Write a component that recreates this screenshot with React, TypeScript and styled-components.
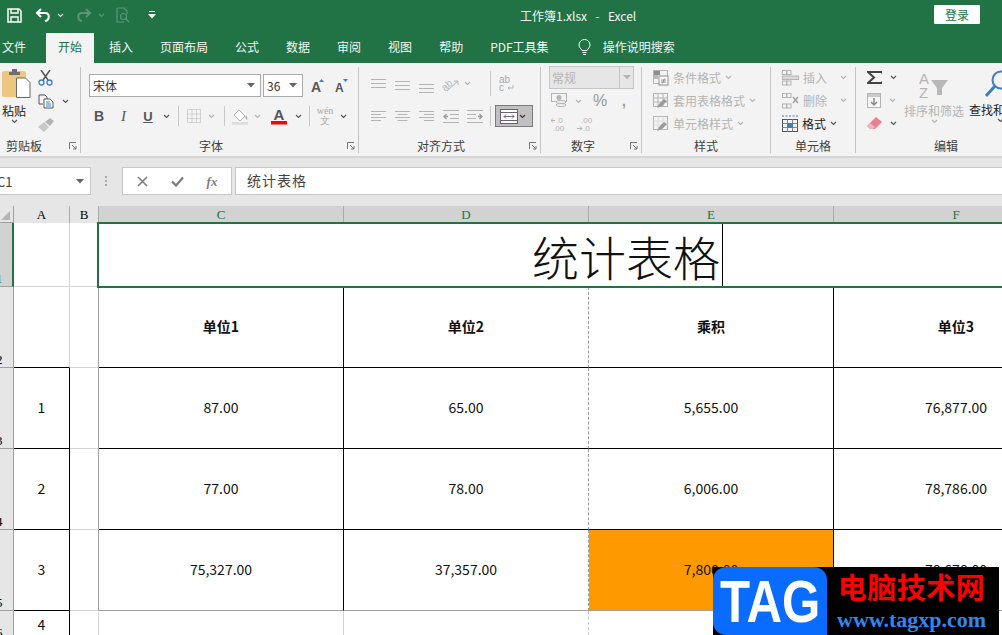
import React from 'react';
import styled, { createGlobalStyle } from 'styled-components';

const UI_FONT = `"Noto Sans CJK SC", "Noto Sans", sans-serif`;
const GREEN = '#217346';
const DIM = '#b4b4b4';
const BLACK_LINE = '#000000';
const GRID_LINE = '#d4d4d4';
const HEAD_LINE = '#a0a0a0';

const GlobalStyle = createGlobalStyle`
  html, body {
    margin: 0;
    padding: 0;
    background: #fff;
  }
  * {
    box-sizing: border-box;
  }
`;

const Page = styled.div`
  position: relative;
  width: 1002px;
  height: 635px;
  overflow: hidden;
  font-family: ${UI_FONT};
  font-size: 12px;
  color: #333;
  background: #fff;
`;

/* title bar */
const TitleBar = styled.div`
  display: flex;
  align-items: center;
  height: 33px;
  padding-bottom: 3px;
  background: ${GREEN};
  color: #fff;
`;

const Quick = styled.div`
  display: flex;
  align-items: center;
  width: 520px;
  padding-left: 7px;
`;

const QuickIcon = styled.span<{ $ml?: number }>`
  display: inline-flex;
  margin-left: ${(p) => p.$ml ?? 0}px;
`;

const DocTitle = styled.div`
  font-size: 12px;
  white-space: pre;
  word-spacing: 1.5px;
  color: #f2f7f4;
`;

const SignIn = styled.button`
  width: 46px;
  height: 19px;
  margin: -2px 22px 0 auto;
  padding: 0;
  border: 0;
  border-radius: 1px;
  background: #fff;
  color: ${GREEN};
  font-family: ${UI_FONT};
  font-size: 12px;
  line-height: 19px;
`;

/* tabs */
const Tabs = styled.div`
  display: flex;
  height: 30px;
  padding-left: 2px;
  background: ${GREEN};
`;

const Tab = styled.div<{ $active?: boolean; $first?: boolean }>`
  display: flex;
  align-items: center;
  height: 30px;
  padding: 0 ${(p) => (p.$first ? 0 : 12)}px 4px;
  margin-right: ${(p) => (p.$first ? 20 : 3)}px;
  background: ${(p) => (p.$active ? '#f3f3f3' : 'transparent')};
  color: ${(p) => (p.$active ? GREEN : '#f2f7f4')};
  white-space: nowrap;
`;

const Bulb = styled.span`
  display: inline-flex;
  margin: -2px 0 0 14px;
  align-self: center;
`;

/* ribbon */
const Ribbon = styled.div`
  display: flex;
  height: 95px;
  padding-top: 3px;
  background: #f3f3f3;
  border-bottom: 2px solid #d6d6d6;
  overflow: hidden;
`;

const Group = styled.div<{ $w: number; $last?: boolean }>`
  position: relative;
  display: flex;
  flex-direction: column;
  flex: none;
  width: ${(p) => p.$w}px;
  height: 88px;
  &::after {
    content: '';
    display: ${(p) => (p.$last ? 'none' : 'block')};
    position: absolute;
    right: 0;
    top: 1px;
    bottom: 1px;
    width: 1px;
    background: #c4c4c4;
  }
`;

const GroupBody = styled.div<{ $pl?: number; $pt?: number; $gap?: number; $row?: boolean }>`
  display: flex;
  flex-direction: ${(p) => (p.$row ? 'row' : 'column')};
  flex: 1;
  min-height: 0;
  padding-left: ${(p) => p.$pl ?? 0}px;
  padding-top: ${(p) => p.$pt ?? 0}px;
  gap: ${(p) => p.$gap ?? 0}px;
`;

const GroupLabel = styled.div<{ $pr?: number; $pl?: number }>`
  position: relative;
  flex: none;
  height: 16px;
  line-height: 16px;
  text-align: center;
  color: #404040;
  padding-left: ${(p) => p.$pl ?? 0}px;
  padding-right: ${(p) => p.$pr ?? 1}px;
`;

const Launcher = styled.span`
  position: absolute;
  right: 4px;
  top: 4px;
  display: inline-flex;
`;

const ToolRow = styled.div<{ $h: number }>`
  display: flex;
  align-items: center;
  flex: none;
  height: ${(p) => p.$h}px;
`;

const Tool = styled.span<{ $w: number; $ml?: number; $pt?: number }>`
  display: inline-flex;
  align-items: center;
  justify-content: center;
  flex: none;
  width: ${(p) => p.$w}px;
  margin-left: ${(p) => p.$ml ?? 0}px;
  padding-top: ${(p) => p.$pt ?? 0}px;
`;

const ToolSep = styled.span<{ $ml: number; $mr: number }>`
  flex: none;
  align-self: stretch;
  width: 1px;
  margin: 1px ${(p) => p.$mr}px 1px ${(p) => p.$ml}px;
  background: #c8c8c8;
`;

const Combo = styled.div<{ $w: number; $mr?: number }>`
  display: flex;
  align-items: center;
  justify-content: space-between;
  flex: none;
  width: ${(p) => p.$w}px;
  height: 23px;
  margin-right: ${(p) => p.$mr ?? 0}px;
  padding: 0 5px 0 3px;
  background: #fff;
  border: 1px solid #ababab;
  color: #333;
`;

const Glyph = styled.span<{ $color?: string; $weight?: number; $italic?: boolean; $size?: number; $under?: boolean }>`
  font-family: "Liberation Serif", serif;
  font-size: ${(p) => p.$size ?? 14}px;
  font-weight: ${(p) => p.$weight ?? 700};
  font-style: ${(p) => (p.$italic ? 'italic' : 'normal')};
  text-decoration: ${(p) => (p.$under ? 'underline' : 'none')};
  text-align: center;
  color: ${(p) => p.$color ?? '#555'};
  line-height: 1;
`;

const SansGlyph = styled(Glyph)`
  font-family: "Liberation Sans", sans-serif;
`;

const MergeButton = styled.div`
  display: flex;
  align-items: center;
  justify-content: space-between;
  flex: none;
  width: 38px;
  height: 22px;
  padding: 0 6px 0 4px;
  background: #c0c0c0;
  border: 1px solid #7a7a7a;
`;

const NumberSelect = styled.div`
  display: flex;
  align-items: center;
  flex: none;
  width: 85px;
  height: 23px;
  background: #e6e6e6;
  border: 1px solid #c6c6c6;
  color: ${DIM};
  font-size: 12px;
  padding-left: 2px;
`;

const NumberArrow = styled.span`
  display: inline-flex;
  align-items: center;
  justify-content: center;
  width: 14px;
  height: 100%;
  margin-left: auto;
  border-left: 1px solid #c6c6c6;
`;

const MenuItem = styled.div<{ $dim?: boolean }>`
  display: flex;
  align-items: center;
  height: 23px;
  gap: 4px;
  color: ${(p) => (p.$dim ? DIM : '#222')};
  white-space: nowrap;
`;

const EditColumn = styled.div<{ $w: number; $ml?: number; $pt?: number; $center?: boolean }>`
  display: flex;
  flex-direction: column;
  flex: none;
  width: ${(p) => p.$w}px;
  margin-left: ${(p) => p.$ml ?? 0}px;
  padding-top: ${(p) => p.$pt ?? 0}px;
  align-items: ${(p) => (p.$center ? 'center' : 'flex-start')};
`;

const EditCaption = styled.div<{ $dim?: boolean }>`
  margin-top: 4px;
  color: ${(p) => (p.$dim ? DIM : '#222')};
  white-space: nowrap;
  line-height: 16px;
`;

const PasteColumn = styled.div`
  display: flex;
  flex-direction: column;
  align-items: center;
  flex: none;
  width: 24px;
  margin-right: 12px;
  padding-top: 2px;
  color: #222;
`;

const PasteGraphic = styled.span`
  display: inline-flex;
  align-self: flex-start;
`;

const PasteCaption = styled.div`
  margin-top: 5px;
  line-height: 16px;
  white-space: nowrap;
`;

const ColumnStack = styled.div`
  display: flex;
  flex-direction: column;
`;

/* formula bar */
const FormulaBar = styled.div`
  display: flex;
  align-items: flex-start;
  height: 48px;
  padding-top: 9px;
  background: #e6e6e6;
`;

const NameBox = styled.div`
  display: flex;
  align-items: center;
  justify-content: space-between;
  width: 92px;
  height: 28px;
  margin-left: -1px;
  padding: 0 6px 0 0;
  background: #fff;
  border: 1px solid #c6c6c6;
  color: #444;
  font-size: 13px;
  overflow: hidden;
`;

const NameText = styled.span`
  margin-left: -3px;
`;

const Dots = styled.span`
  display: flex;
  flex-direction: column;
  gap: 2px;
  width: 2px;
  margin: 9px 15px 0 14px;
  i {
    display: block;
    width: 2px;
    height: 2px;
    background: #a8a8a8;
  }
`;

const FormulaButtons = styled.div`
  display: flex;
  align-items: center;
  justify-content: space-around;
  width: 110px;
  height: 28px;
  padding: 0 2px;
  background: #fff;
  border: 1px solid #c6c6c6;
`;

const FormulaInput = styled.div`
  flex: 1;
  height: 28px;
  margin-left: 3px;
  padding-left: 11px;
  background: #fff;
  border: 1px solid #c6c6c6;
  border-right: 0;
  color: #444;
  font-size: 14px;
  letter-spacing: 1px;
  line-height: 25px;
`;

/* sheet */
const Sheet = styled.div`
  display: grid;
  grid-template-columns: 14px 56px 29px 245px 245px 245px 245px;
  grid-template-rows: 17px 64px 81px 81px 81px 81px 30px;
  width: 1079px;
  background: #fff;
`;

const Corner = styled.div`
  display: flex;
  align-items: flex-end;
  justify-content: flex-end;
  padding: 0 3px 2px 0;
  background: #e6e6e6;
  border-right: 1px solid ${HEAD_LINE};
  border-bottom: 1px solid ${HEAD_LINE};
`;

const ColHead = styled.div<{ $sel?: boolean }>`
  display: flex;
  align-items: center;
  justify-content: center;
  background: ${(p) => (p.$sel ? '#d2d2d2' : '#e6e6e6')};
  border-right: 1px solid #ababab;
  color: ${(p) => (p.$sel ? GREEN : '#000')};
  font-family: "Liberation Serif", serif;
  font-size: 13px;
  line-height: 1;
`;

const RowHead = styled.div<{ $sel?: boolean }>`
  display: flex;
  align-items: flex-end;
  overflow: hidden;
  background: ${(p) => (p.$sel ? '#d2d2d2' : '#e6e6e6')};
  border-right: ${(p) => (p.$sel ? `2px solid ${GREEN}` : `1px solid ${HEAD_LINE}`)};
  border-bottom: 1px solid ${HEAD_LINE};
  color: ${(p) => (p.$sel ? GREEN : '#000')};
  font-family: "Liberation Serif", serif;
  font-size: 13px;
  line-height: 14px;
  span {
    margin-left: -4px;
  }
`;

const Cell = styled.div<{ $r?: string; $b?: string; $dashed?: boolean; $bg?: string; $bold?: boolean }>`
  display: flex;
  align-items: center;
  justify-content: center;
  padding-bottom: 3px;
  background: ${(p) => p.$bg ?? '#fff'};
  border-right: 1px ${(p) => (p.$dashed ? 'dashed' : 'solid')} ${(p) => p.$r ?? GRID_LINE};
  border-bottom: 1px solid ${(p) => p.$b ?? GRID_LINE};
  color: #111;
  font-size: 14px;
  font-weight: ${(p) => (p.$bold ? 700 : 400)};
`;

const TitleCell = styled.div`
  position: relative;
  grid-column: 4 / span 4;
  display: flex;
  align-items: center;
  padding-left: 433px;
  background: #fff;
  &::after {
    content: '';
    position: absolute;
    left: -2px;
    right: -2px;
    top: -1px;
    bottom: -1px;
    border: 2px solid ${GREEN};
  }
`;

const TitleText = styled.span`
  display: flex;
  align-items: center;
  height: 100%;
  padding-right: 2px;
  border-right: 1px solid #000;
  color: #111;
  font-size: 47px;
  font-weight: 300;
  line-height: 1;
`;

/* watermark */
const Watermark = styled.div`
  position: absolute;
  left: 713px;
  top: 567px;
  display: flex;
  width: 286px;
  height: 68px;
  background: #000;
`;

const TagBox = styled.div`
  display: flex;
  align-items: center;
  justify-content: center;
  width: 114px;
  height: 68px;
  overflow: hidden;
  border-radius: 13px 13px 0 13px;
  background: #0a6cff;
  color: #fff;
  font-family: "Liberation Sans", sans-serif;
  font-size: 60px;
  font-weight: 700;
`;

const TagLetters = styled.span`
  display: inline-block;
  transform: scaleX(0.82);
`;

const TagText = styled.div`
  display: flex;
  flex-direction: column;
  align-items: center;
  padding-left: 10px;
`;

const TagName = styled.div`
  color: #f00;
  font-size: 29px;
  font-weight: 700;
  letter-spacing: 0.5px;
  line-height: 38px;
`;

const TagUrl = styled.div`
  margin-top: 3px;
  color: #2f86f5;
  font-family: "Liberation Serif", serif;
  font-size: 22px;
  font-weight: 700;
  line-height: 24px;
  white-space: nowrap;
`;

/* icons */
const Chev = ({ color = '#555' }: { color?: string }): JSX.Element => (
  <svg width="7" height="5" viewBox="0 0 7 5" fill="none">
    <path d="M1 1l2.5 2.5L6 1" stroke={color} strokeWidth="1.1" />
  </svg>
);

const DropTriangle = ({ color = '#666' }: { color?: string }): JSX.Element => (
  <svg width="8" height="5" viewBox="0 0 8 5">
    <path d="M0 0h8L4 4.5z" fill={color} />
  </svg>
);

const SaveIcon = (): JSX.Element => (
  <svg width="15" height="15" viewBox="0 0 15 15" fill="none">
    <path d="M1 1h11l2 2v11H1z" stroke="#fff" strokeWidth="1.5" />
    <path d="M4 1v4h7V1M4 14V9h7v5" stroke="#fff" strokeWidth="1.4" />
  </svg>
);

const UndoIcon = ({ color = '#fff', flip = false }: { color?: string; flip?: boolean }): JSX.Element => (
  <svg width="16" height="14" viewBox="0 0 16 14" fill="none" transform={flip ? 'scale(-1 1)' : undefined}>
    <path d="M6 1L2 5l4 4M2 5h8c5 0 5 7 0 8" stroke={color} strokeWidth="2" />
  </svg>
);

const PreviewIcon = (): JSX.Element => (
  <svg width="14" height="16" viewBox="0 0 14 16" fill="none">
    <path d="M1 1h7l3 3v3M1 1v14h7" stroke="#5b9478" strokeWidth="1.2" />
    <circle cx="7.5" cy="9.5" r="3" stroke="#5b9478" strokeWidth="1.2" />
    <path d="M10 12l3 3" stroke="#5b9478" strokeWidth="1.4" />
  </svg>
);

const CustomizeIcon = (): JSX.Element => (
  <svg width="8" height="8" viewBox="0 0 8 8">
    <path d="M1 0h6v1H1zM0 3h8L4 7.5z" fill="#fff" />
  </svg>
);

const BulbIcon = (): JSX.Element => (
  <svg width="13" height="17" viewBox="0 0 13 17" fill="none">
    <path d="M4 11.5C3 9.5 1 8.5 1 6a5.5 5.5 0 0 1 11 0c0 2.5-2 3.5-3 5.5z" stroke="#fff" strokeWidth="1" />
    <path d="M4.5 13.5h4M5 15.5h3" stroke="#fff" strokeWidth="1.1" />
  </svg>
);

const PasteIcon = (): JSX.Element => (
  <svg width="29" height="30" viewBox="0 0 29 30">
    <rect x="0" y="3" width="24" height="26" rx="2" fill="#edc77f" />
    <path d="M7 4h3V1h5v3h3v3H7z" fill="#6e6e6e" />
    <path d="M14.5 10h9l4.5 4.5V29.5H14.5z" fill="#fff" stroke="#6a6a6a" strokeWidth="1" />
  </svg>
);

const CutIcon = (): JSX.Element => (
  <svg width="15" height="16" viewBox="0 0 15 16" fill="none">
    <path d="M3 0l7 10M12 0L5 10" stroke="#555" strokeWidth="1.5" />
    <circle cx="3.5" cy="12.5" r="2.5" stroke="#3f7fc0" strokeWidth="1.3" />
    <circle cx="11.5" cy="12.5" r="2.5" stroke="#3f7fc0" strokeWidth="1.3" />
  </svg>
);

const CopyIcon = (): JSX.Element => (
  <svg width="16" height="15" viewBox="0 0 16 15" fill="none">
    <path d="M1 1h6l2 2v2M1 1v9h4" stroke="#555" />
    <path d="M6 5h6l3 3v6H6z" fill="#fff" stroke="#555" />
    <path d="M8 8h4M8 10h5M8 12h5" stroke="#3f7fc0" />
  </svg>
);

const BrushIcon = (): JSX.Element => (
  <svg width="16" height="14" viewBox="0 0 16 14">
    <path d="M0 9l6-5 5 5-5 5z" fill="#c9c9c9" />
    <path d="M7 4l5-4 4 3-4 5z" fill="#b4b4b4" />
  </svg>
);

const GrowIcon = ({ size, accent, up }: { size: number; accent: string; up: boolean }): JSX.Element => (
  <svg width="14" height="15" viewBox="0 0 14 15">
    <path d={up ? 'M8 4h5L10.5 1z' : 'M8 1h5L10.5 4z'} fill={accent} />
    <text x="0" y="14" fontFamily="Liberation Sans" fontWeight="700" fontSize={size} fill="#555">A</text>
  </svg>
);

const BorderIcon = (): JSX.Element => (
  <svg width="14" height="14" viewBox="0 0 14 14" fill="none" stroke={DIM} strokeDasharray="1 1">
    <path d="M.5 .5h13v13H.5zM5 .5v13M9.5 .5v13M.5 5h13M.5 9.5h13" />
  </svg>
);

const FillIcon = (): JSX.Element => (
  <svg width="17" height="17" viewBox="0 0 17 17" fill="none">
    <path d="M2 7l5-5 6 6-5 5z" fill="#fff" stroke={DIM} />
    <path d="M14 7c1 2 2 3 1 5-2-1-2-3-1-5z" fill={DIM} />
    <rect x="0" y="14" width="16" height="3" fill="#dedede" />
  </svg>
);

const FontColorIcon = (): JSX.Element => (
  <svg width="16" height="18" viewBox="0 0 16 18">
    <text x="2.5" y="13" fontFamily="Liberation Sans" fontWeight="700" fontSize="15" fill="#555">A</text>
    <rect x="0" y="14" width="16" height="3.5" fill="#f00" />
  </svg>
);

const VAlignIcon = (): JSX.Element => (
  <svg width="15" height="9" viewBox="0 0 15 9" fill="none" stroke={DIM}>
    <path d="M0 .5h15M0 4.5h15M0 8.5h15" />
  </svg>
);

const HAlignIcon = ({ align }: { align: 'l' | 'c' | 'r' }): JSX.Element => {
  const widths = [15, 10, 15, 10];
  return (
    <svg width="15" height="10" viewBox="0 0 15 10" fill="none" stroke={DIM}>
      {widths.map((w, i) => {
        const x = align === 'l' ? 0 : align === 'c' ? (15 - w) / 2 : 15 - w;
        return <path key={i} d={`M${x} ${i * 3 + 0.5}h${w}`} />;
      })}
    </svg>
  );
};

const IndentIcon = ({ flip }: { flip?: boolean }): JSX.Element => (
  <svg width="16" height="13" viewBox="0 0 16 13" fill="none" stroke={DIM} transform={flip ? 'scale(-1 1)' : undefined}>
    <path d="M0 .5h16M7 4.5h9M7 8.5h9M0 12.5h16" />
    <path d="M5 6.5H1M3.5 4L1 6.5 3.5 9" strokeWidth="1.3" stroke="#9a9a9a" />
  </svg>
);

const OrientIcon = (): JSX.Element => (
  <svg width="17" height="16" viewBox="0 0 17 16" fill="none">
    <text x="0" y="12" transform="rotate(-40 6 10)" fontFamily="Liberation Sans" fontSize="10" fill={DIM}>ab</text>
    <path d="M5 15L16 5M16 5h-4M16 5v4" stroke={DIM} />
  </svg>
);

const WrapIcon = (): JSX.Element => (
  <svg width="16" height="17" viewBox="0 0 16 17">
    <text x="0" y="8" fontFamily="Liberation Sans" fontSize="10" fill="#a8a8a8">ab</text>
    <text x="0" y="16" fontFamily="Liberation Sans" fontSize="10" fill="#a8a8a8">c</text>
    <path d="M14 10v3H9M10.5 11.5L9 13l1.5 1.5" fill="none" stroke={DIM} />
  </svg>
);

const MergeIcon = (): JSX.Element => (
  <svg width="18" height="15" viewBox="0 0 18 15">
    <rect x=".5" y=".5" width="17" height="14" fill="#fff" stroke="#6f5a7a" />
    <path d="M.5 3.5h17M.5 11.5h17" stroke="#6f5a7a" />
    <path d="M4 7.5h10M6 5.5l-2 2 2 2M12 5.5l2 2-2 2" stroke="#6f6f6f" fill="none" />
  </svg>
);

const CurrencyIcon = (): JSX.Element => (
  <svg width="17" height="16" viewBox="0 0 17 16" fill="none">
    <rect x=".5" y=".5" width="15" height="8" stroke={DIM} />
    <circle cx="8" cy="4.5" r="2.5" fill={DIM} />
    <ellipse cx="10" cy="9" rx="5" ry="1.5" stroke={DIM} fill="#f3f3f3" />
    <ellipse cx="10" cy="12" rx="5" ry="1.5" stroke={DIM} fill="#f3f3f3" />
  </svg>
);

const DecimalIcon = ({ inc }: { inc: boolean }): JSX.Element => (
  <svg width="16" height="16" viewBox="0 0 16 16">
    <text x={inc ? 5 : 4} y="7" fontFamily="Liberation Sans" fontSize="8" fill={DIM}>{inc ? '.0' : '.00'}</text>
    <text x={inc ? 2 : 6} y="15" fontFamily="Liberation Sans" fontSize="8" fill={DIM}>{inc ? '.00' : '.0'}</text>
    <path d={inc ? 'M4 4.5H0M2 2.5l-2 2 2 2' : 'M0 12.5h5M3 10.5l2 2-2 2'} stroke={DIM} fill="none" />
  </svg>
);

const SheetStyleIcon = ({ kind }: { kind: 'cond' | 'table' | 'cell' }): JSX.Element => (
  <svg width="16" height="16" viewBox="0 0 16 16" fill="none">
    <rect x=".5" y=".5" width="14" height="13" fill="#f3f3f3" stroke={DIM} />
    {kind === 'cond' && (
      <>
        <rect x="1" y="1" width="6" height="4" fill="#8d8d8d" />
        <rect x="1" y="5" width="4" height="4" fill="#b9b9b9" />
        <rect x="6" y="6" width="9" height="9" fill="#fff" stroke="#8d8d8d" />
        <path d="M8 10h5M8 12h5M11.5 8.5l-2 5" stroke="#8d8d8d" />
      </>
    )}
    {kind !== 'cond' && (
      <>
        <path d="M.5 5h14M.5 9h14M5 .5v13M10 .5v13" stroke={kind === 'table' ? DIM : '#dcdcdc'} />
        <path d="M4 15l2-4 5-5 3 2-5 5z" fill="#9a9a9a" />
      </>
    )}
  </svg>
);

const CellOpIcon = ({ mark }: { mark: 'insert' | 'delete' }): JSX.Element => (
  <svg width="17" height="16" viewBox="0 0 17 16" fill="none" stroke={DIM}>
    <rect x=".5" y=".5" width="4" height="4" />
    <rect x="5" y=".5" width="4" height="4" />
    <rect x=".5" y="11" width="4" height="4" />
    <rect x="5" y="11" width="4" height="4" />
    {mark === 'insert' ? (
      <rect x=".5" y="6" width="16" height="3.5" fill="#dcdcdc" />
    ) : (
      <path d="M11 4l5 6M16 4l-5 6" strokeWidth="1.4" stroke="#a0a0a0" />
    )}
  </svg>
);

const FormatIcon = (): JSX.Element => (
  <svg width="16" height="17" viewBox="0 0 16 17" fill="none">
    <path d="M0 1h16" stroke="#3f7fc0" strokeDasharray="2 1.5" />
    <rect x=".5" y="4.5" width="15" height="12" stroke="#555" />
    <path d="M.5 8.5h15M.5 12.5h15M5.5 4.5v12M10.5 4.5v12" stroke="#888" />
    <rect x="5" y="8" width="6" height="5" fill="#3f7fc0" />
  </svg>
);

const SigmaIcon = (): JSX.Element => (
  <svg width="15" height="13" viewBox="0 0 15 13" fill="none">
    <path d="M15 2.5V1H1l6 5.5L1 12h14v-1.5" stroke="#444" strokeWidth="2" />
  </svg>
);

const FillDownIcon = (): JSX.Element => (
  <svg width="14" height="15" viewBox="0 0 14 15" fill="none">
    <rect x=".5" y=".5" width="13" height="14" fill="#f7f7f7" stroke={DIM} />
    <path d="M1 1h12v3H1z" fill="#c9c9c9" />
    <path d="M7 5v7M4 9l3 3 3-3" stroke="#8a8a8a" strokeWidth="1.5" />
  </svg>
);

const EraserIcon = (): JSX.Element => (
  <svg width="15" height="13" viewBox="0 0 15 13">
    <path d="M0 9l9-9 6 5-7 7H3z" fill="#e9808f" />
    <path d="M0 9l3-3 5 4-2 2H3z" fill="#f2b6bf" />
  </svg>
);

const SortIcon = (): JSX.Element => (
  <svg width="30" height="27" viewBox="0 0 30 27">
    <text x="0" y="12" fontFamily="Liberation Sans" fontSize="15" fill={DIM}>A</text>
    <text x="0" y="26" fontFamily="Liberation Sans" fontSize="15" fill={DIM}>Z</text>
    <path d="M12 8h17l-6 8v7h-5v-7z" fill="#b8b8b8" />
  </svg>
);

const FindIcon = (): JSX.Element => (
  <svg width="26" height="28" viewBox="0 0 26 28" fill="none">
    <circle cx="16" cy="10" r="8.5" stroke="#3f7fc0" strokeWidth="2" />
    <path d="M10 16L1 26" stroke="#3f7fc0" strokeWidth="3" />
  </svg>
);

const LauncherIcon = (): JSX.Element => (
  <svg width="8" height="8" viewBox="0 0 8 8" fill="none" stroke="#777">
    <path d="M.5 7V.5H7M3 3l4 4M7 4v3H4" />
  </svg>
);

const CrossIcon = (): JSX.Element => (
  <svg width="11" height="11" viewBox="0 0 11 11" fill="none">
    <path d="M1 1l9 9M10 1l-9 9" stroke="#7d7d7d" strokeWidth="1.6" />
  </svg>
);

const CheckIcon = (): JSX.Element => (
  <svg width="13" height="11" viewBox="0 0 13 11" fill="none">
    <path d="M1 5.5L5 9.5 12 1.5" stroke="#7d7d7d" strokeWidth="2.3" />
  </svg>
);

const CornerIcon = (): JSX.Element => (
  <svg width="9" height="9" viewBox="0 0 9 9">
    <path d="M9 0v9H0z" fill="#b4b4b4" />
  </svg>
);

const tabNames = ['插入', '页面布局', '公式', '数据', '审阅', '视图', '帮助', 'PDF工具集'];

const rowsData = [
  { no: '1', values: ['87.00', '65.00', '5,655.00', '76,877.00'] },
  { no: '2', values: ['77.00', '78.00', '6,006.00', '78,786.00'] },
  { no: '3', values: ['75,327.00', '37,357.00', '7,800.00', '78,678.00'] },
];

const App = (): JSX.Element => {
  return (
    <Page>
      <GlobalStyle />
      <TitleBar>
        <Quick>
          <QuickIcon><SaveIcon /></QuickIcon>
          <QuickIcon $ml={13}><UndoIcon /></QuickIcon>
          <QuickIcon $ml={6}><Chev color="#d5e5dc" /></QuickIcon>
          <QuickIcon $ml={12}><UndoIcon color="#5b9478" flip /></QuickIcon>
          <QuickIcon $ml={6}><Chev color="#5b9478" /></QuickIcon>
          <QuickIcon $ml={11}><PreviewIcon /></QuickIcon>
          <QuickIcon $ml={18}><CustomizeIcon /></QuickIcon>
        </Quick>
        <DocTitle>{'工作簿1.xlsx  -  Excel'}</DocTitle>
        <SignIn>登录</SignIn>
      </TitleBar>

      <Tabs>
        <Tab $first>文件</Tab>
        <Tab $active>开始</Tab>
        {tabNames.map((name) => (
          <Tab key={name}>{name}</Tab>
        ))}
        <Bulb><BulbIcon /></Bulb>
        <Tab>操作说明搜索</Tab>
      </Tabs>

      <Ribbon>
        <Group $w={81}>
          <GroupBody $row $pl={2}>
            <PasteColumn>
              <PasteGraphic><PasteIcon /></PasteGraphic>
              <PasteCaption>粘贴</PasteCaption>
              <Chev />
            </PasteColumn>
            <ColumnStack>
              <ToolRow $h={24}><CutIcon /></ToolRow>
              <ToolRow $h={23}>
                <CopyIcon />
                <Tool $w={22}><Chev /></Tool>
              </ToolRow>
              <ToolRow $h={23}><BrushIcon /></ToolRow>
            </ColumnStack>
          </GroupBody>
          <GroupLabel $pr={33}>
            剪贴板
            <Launcher><LauncherIcon /></Launcher>
          </GroupLabel>
        </Group>

        <Group $w={278}>
          <GroupBody $pl={8} $pt={8} $gap={8}>
            <ToolRow $h={23}>
              <Combo $w={172} $mr={2}>宋体<DropTriangle /></Combo>
              <Combo $w={40}>36<DropTriangle /></Combo>
              <Tool $w={14} $ml={8}><GrowIcon size={14} accent="#3f7fc0" up /></Tool>
              <Tool $w={14} $ml={10}><GrowIcon size={12} accent="#3f7fc0" up={false} /></Tool>
            </ToolRow>
            <ToolRow $h={22}>
              <Tool $w={20}><SansGlyph>B</SansGlyph></Tool>
              <Tool $w={29}><Glyph $italic $weight={400} $size={15}>I</Glyph></Tool>
              <Tool $w={20}><SansGlyph $size={13} $under>U</SansGlyph></Tool>
              <Tool $w={16}><Chev /></Tool>
              <ToolSep $ml={4} $mr={4} />
              <Tool $w={21}><BorderIcon /></Tool>
              <Tool $w={15}><Chev color={DIM} /></Tool>
              <ToolSep $ml={5} $mr={4} />
              <Tool $w={22}><FillIcon /></Tool>
              <Tool $w={13}><Chev color={DIM} /></Tool>
              <Tool $w={30}><FontColorIcon /></Tool>
              <Tool $w={8}><Chev /></Tool>
              <ToolSep $ml={7} $mr={3} />
              <Tool $w={24}>
                <Glyph $color="#a8a8a8" $weight={400} $size={10}>
                  wén<br />文
                </Glyph>
              </Tool>
              <Tool $w={13}><Chev /></Tool>
            </ToolRow>
          </GroupBody>
          <GroupLabel $pr={18}>
            字体
            <Launcher><LauncherIcon /></Launcher>
          </GroupLabel>
        </Group>

        <Group $w={182}>
          <GroupBody $pl={7} $pt={4} $gap={8}>
            <ToolRow $h={27}>
              <Tool $w={24}><VAlignIcon /></Tool>
              <Tool $w={24} $pt={4}><VAlignIcon /></Tool>
              <Tool $w={24} $pt={9}><VAlignIcon /></Tool>
              <Tool $w={25}><OrientIcon /></Tool>
              <Tool $w={8}><Chev color={DIM} /></Tool>
              <ToolSep $ml={19} $mr={5} />
              <Tool $w={21}><WrapIcon /></Tool>
            </ToolRow>
            <ToolRow $h={22}>
              <Tool $w={24}><HAlignIcon align="l" /></Tool>
              <Tool $w={24}><HAlignIcon align="c" /></Tool>
              <Tool $w={24}><HAlignIcon align="r" /></Tool>
              <Tool $w={25}><IndentIcon /></Tool>
              <Tool $w={24}><IndentIcon flip /></Tool>
              <ToolSep $ml={3} $mr={4} />
              <MergeButton>
                <MergeIcon />
                <Chev color="#333" />
              </MergeButton>
            </ToolRow>
          </GroupBody>
          <GroupLabel $pr={18}>
            对齐方式
            <Launcher><LauncherIcon /></Launcher>
          </GroupLabel>
        </Group>

        <Group $w={101}>
          <GroupBody $pl={8}>
            <NumberSelect>
              常规
              <NumberArrow><DropTriangle color={DIM} /></NumberArrow>
            </NumberSelect>
            <ToolRow $h={24}>
              <Tool $w={20}><CurrencyIcon /></Tool>
              <Tool $w={18}><Chev color={DIM} /></Tool>
              <Tool $w={26}><SansGlyph $weight={400} $size={16} $color="#999">%</SansGlyph></Tool>
              <Tool $w={22}><SansGlyph $size={14} $color="#999">,</SansGlyph></Tool>
            </ToolRow>
            <ToolRow $h={22}>
              <Tool $w={20}><DecimalIcon inc /></Tool>
              <Tool $w={32}><DecimalIcon inc={false} /></Tool>
            </ToolRow>
          </GroupBody>
          <GroupLabel $pr={17}>
            数字
            <Launcher><LauncherIcon /></Launcher>
          </GroupLabel>
        </Group>

        <Group $w={129}>
          <GroupBody $pl={11}>
            <MenuItem $dim><SheetStyleIcon kind="cond" />条件格式<Chev color={DIM} /></MenuItem>
            <MenuItem $dim><SheetStyleIcon kind="table" />套用表格格式<Chev color={DIM} /></MenuItem>
            <MenuItem $dim><SheetStyleIcon kind="cell" />单元格样式<Chev color={DIM} /></MenuItem>
          </GroupBody>
          <GroupLabel>样式</GroupLabel>
        </Group>

        <Group $w={85}>
          <GroupBody $pl={11}>
            <MenuItem $dim><CellOpIcon mark="insert" />插入<Tool $w={12} $ml={6}><Chev color={DIM} /></Tool></MenuItem>
            <MenuItem $dim><CellOpIcon mark="delete" />删除<Tool $w={12} $ml={6}><Chev color={DIM} /></Tool></MenuItem>
            <MenuItem><FormatIcon />格式<Chev /></MenuItem>
          </GroupBody>
          <GroupLabel>单元格</GroupLabel>
        </Group>

        <Group $w={146} $last>
          <GroupBody $row $pl={11}>
            <EditColumn $w={37}>
              <ToolRow $h={23}><SigmaIcon /><Tool $w={22}><Chev /></Tool></ToolRow>
              <ToolRow $h={23}><FillDownIcon /><Tool $w={22}><Chev color={DIM} /></Tool></ToolRow>
              <ToolRow $h={23}><EraserIcon /><Tool $w={22}><Chev /></Tool></ToolRow>
            </EditColumn>
            <EditColumn $w={60} $center $pt={6}>
              <SortIcon />
              <EditCaption $dim>排序和筛选</EditCaption>
              <Chev color={DIM} />
            </EditColumn>
            <EditColumn $w={60} $ml={5} $pt={4}>
              <Tool $w={26} $ml={16}><FindIcon /></Tool>
              <EditCaption>查找和选择</EditCaption>
              <Tool $w={7} $ml={28}><Chev /></Tool>
            </EditColumn>
          </GroupBody>
          <GroupLabel $pl={34} $pr={0}>编辑</GroupLabel>
        </Group>
      </Ribbon>

      <FormulaBar>
        <NameBox>
          <NameText>C1</NameText>
          <DropTriangle />
        </NameBox>
        <Dots><i /><i /><i /></Dots>
        <FormulaButtons>
          <CrossIcon />
          <CheckIcon />
          <Glyph $italic $size={13} $color="#7d7d7d">fx</Glyph>
        </FormulaButtons>
        <FormulaInput>统计表格</FormulaInput>
      </FormulaBar>

      <Sheet>
        <Corner><CornerIcon /></Corner>
        <ColHead>A</ColHead>
        <ColHead>B</ColHead>
        <ColHead $sel>C</ColHead>
        <ColHead $sel>D</ColHead>
        <ColHead $sel>E</ColHead>
        <ColHead $sel>F</ColHead>

        <RowHead $sel><span>1</span></RowHead>
        <Cell />
        <Cell />
        <TitleCell><TitleText>统计表格</TitleText></TitleCell>

        <RowHead><span>2</span></RowHead>
        <Cell $b={BLACK_LINE} />
        <Cell $r={HEAD_LINE} />
        <Cell $r={BLACK_LINE} $b={BLACK_LINE} $bold>单位1</Cell>
        <Cell $r="#9a9a9a" $dashed $b={BLACK_LINE} $bold>单位2</Cell>
        <Cell $r={BLACK_LINE} $b={BLACK_LINE} $bold>乘积</Cell>
        <Cell $r={BLACK_LINE} $b={BLACK_LINE} $bold>单位3</Cell>

        {rowsData.map((row, index) => {
          const last = index === rowsData.length - 1;
          const rowLine = last ? HEAD_LINE : BLACK_LINE;
          return (
            <React.Fragment key={row.no}>
              <RowHead><span>{index + 3}</span></RowHead>
              <Cell $r={BLACK_LINE} $b={BLACK_LINE}>{row.no}</Cell>
              <Cell $r={HEAD_LINE} />
              <Cell $r={BLACK_LINE} $b={rowLine}>{row.values[0]}</Cell>
              <Cell $r="#9a9a9a" $dashed $b={rowLine}>{row.values[1]}</Cell>
              <Cell $r={BLACK_LINE} $b={rowLine} $bg={last ? '#ff9900' : undefined}>{row.values[2]}</Cell>
              <Cell $r={BLACK_LINE} $b={rowLine}>{row.values[3]}</Cell>
            </React.Fragment>
          );
        })}

        <RowHead><span>6</span></RowHead>
        <Cell $r={BLACK_LINE}>4</Cell>
        <Cell />
        <Cell />
        <Cell $dashed $r="#c4c4c4" />
        <Cell />
        <Cell />
      </Sheet>

      <Watermark>
        <TagBox><TagLetters>TAG</TagLetters></TagBox>
        <TagText>
          <TagName>电脑技术网</TagName>
          <TagUrl>www.tagxp.com</TagUrl>
        </TagText>
      </Watermark>
    </Page>
  );
};

export default App;
